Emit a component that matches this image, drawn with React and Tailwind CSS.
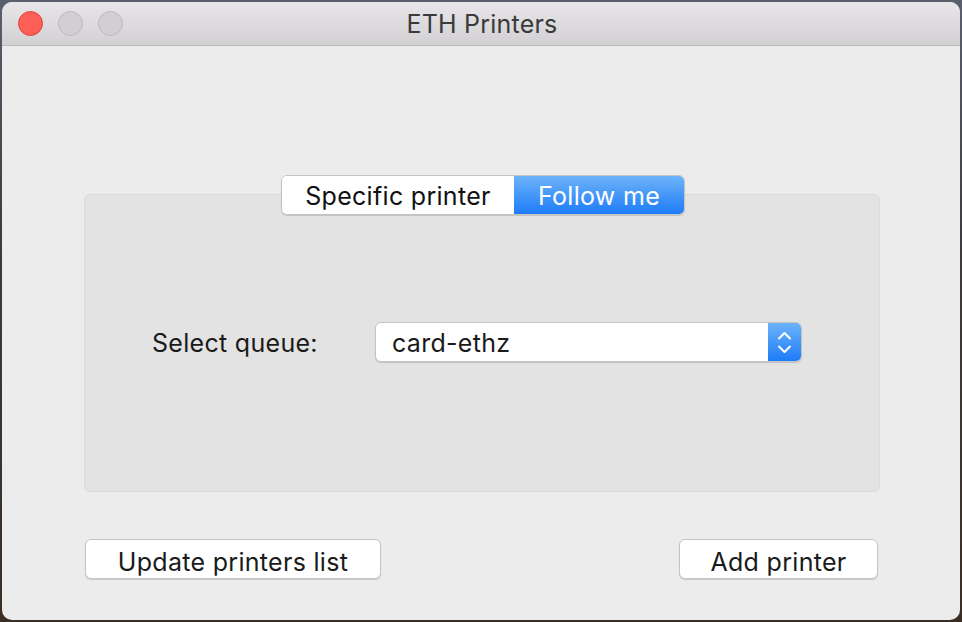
import { useState } from 'react'

function TrafficLight({ color, border }) {
  return <div className={`h-[25px] w-[25px] rounded-full border ${color} ${border}`} />
}

export default function App() {
  const [mode, setMode] = useState('follow')

  return (
    <div
      className="h-[622px] w-[962px] overflow-hidden bg-[linear-gradient(180deg,#5a5f6e_0%,#3c3a3c_40%,#3a2e24_100%)] pl-[2px] pt-[2px]"
      style={{ fontFamily: '"Inter", "Liberation Sans", sans-serif' }}
    >
      <div className="flex h-[618px] w-[958px] flex-col overflow-hidden rounded-[10px] bg-[#ececec] tracking-[0.3px]">
        {/* title bar */}
        <div className="relative flex h-[44px] items-center border-b border-[#bdbbbd] bg-[linear-gradient(180deg,#e8e6e8,#d2d0d2)]">
          <div className="flex items-center gap-[15px] pl-[16px]">
            <TrafficLight color="bg-[#fd5f57]" border="border-[#e0443e]" />
            <TrafficLight color="bg-[#d1cfd1]" border="border-[#bcbabc]" />
            <TrafficLight color="bg-[#d1cfd1]" border="border-[#bcbabc]" />
          </div>
          <div className="absolute inset-0 flex items-center justify-center pl-[2px] pt-[2px] text-[25px] tracking-[0.2px] text-[#3a3a3a]">
            ETH Printers
          </div>
        </div>

        {/* content */}
        <div className="flex flex-1 flex-col px-[82px] pt-[129px]">
          <div className="relative">
            <div className="mt-[19px] h-[298px] w-[796px] rounded-[6px] border border-[#dadada] bg-[#e3e3e3]">
              <div className="flex items-center pl-[67px] pt-[127px]">
                <div className="w-[223px] pt-[3px] text-[25px] text-[#1a1a1a]">Select queue:</div>
                <div className="flex h-[40px] w-[427px] overflow-hidden rounded-[6px] border border-[#c4c4c4] bg-white shadow-[0_1px_1px_rgba(0,0,0,0.15)]">
                  <div className="flex flex-1 items-center pl-[16px] pt-[3px] text-[25px] text-[#1a1a1a]">card-ethz</div>
                  <div className="flex w-[33px] flex-col items-center justify-center gap-[5px] bg-[linear-gradient(180deg,#6cb3fa,#1e7cf7)]">
                    <svg width="15" height="9" viewBox="0 0 15 9" fill="none" stroke="white" strokeWidth="2" strokeLinecap="round" strokeLinejoin="round">
                      <path d="M2 7.5 L7.5 2 L13 7.5" />
                    </svg>
                    <svg width="15" height="9" viewBox="0 0 15 9" fill="none" stroke="white" strokeWidth="2" strokeLinecap="round" strokeLinejoin="round">
                      <path d="M2 1.5 L7.5 7 L13 1.5" />
                    </svg>
                  </div>
                </div>
              </div>
            </div>
            <div className="absolute left-[197px] top-0 flex h-[40px] overflow-hidden rounded-[6px] border border-[#c4c4c4] shadow-[0_1px_1px_rgba(0,0,0,0.15)]">
              <button
                onClick={() => setMode('specific')}
                className={`w-[232px] pt-[2px] text-[25px] ${mode === 'specific' ? 'bg-[linear-gradient(180deg,#6cb3fa,#1e7cf7)] text-white' : 'bg-white text-[#111]'}`}
              >
                Specific printer
              </button>
              <button
                onClick={() => setMode('follow')}
                className={`w-[170px] pt-[2px] text-[25px] ${mode === 'follow' ? 'bg-[linear-gradient(180deg,#6cb3fa,#1e7cf7)] text-white' : 'bg-white text-[#111]'}`}
              >
                Follow me
              </button>
            </div>
          </div>

          <div className="mt-[47px] flex justify-between pl-[1px] pr-0">
            <button className="h-[40px] w-[296px] rounded-[6px] border border-[#c4c4c4] bg-white pt-[4px] text-[25px] text-[#1a1a1a] shadow-[0_1px_1px_rgba(0,0,0,0.15)]">
              Update printers list
            </button>
            <button className="h-[40px] w-[199px] rounded-[6px] border border-[#c4c4c4] bg-white pt-[4px] text-[25px] text-[#1a1a1a] shadow-[0_1px_1px_rgba(0,0,0,0.15)]">
              Add printer
            </button>
          </div>
        </div>
      </div>
    </div>
  )
}
